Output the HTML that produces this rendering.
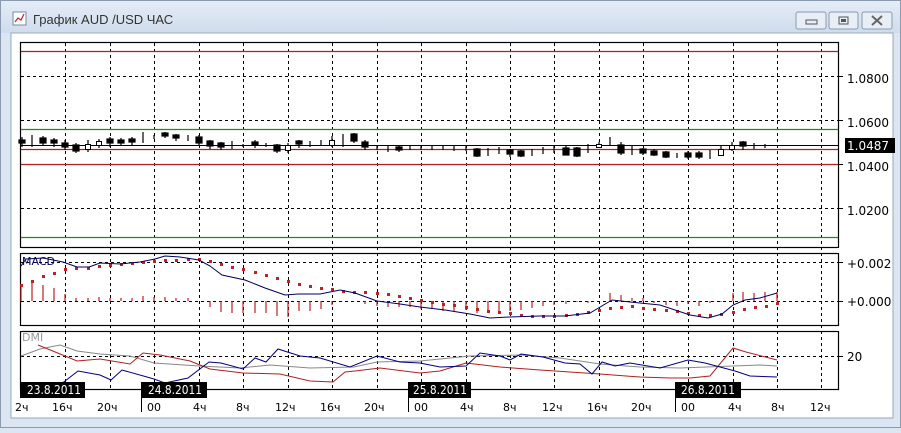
<!DOCTYPE html>
<html><head><meta charset="utf-8"><style>
body{margin:0;width:901px;height:428px;overflow:hidden;background:#dbe6f2;font-family:"Liberation Sans",sans-serif}
</style></head><body>
<svg width="901" height="428" viewBox="0 0 901 428" xmlns="http://www.w3.org/2000/svg" font-family="Liberation Sans, DejaVu Sans, sans-serif">
<defs><linearGradient id="tb" x1="0" y1="0" x2="0" y2="1"><stop offset="0" stop-color="#e4edf7"/><stop offset="1" stop-color="#cfdcec"/></linearGradient></defs>
<rect x="0" y="0" width="901" height="428" fill="#dbe6f2"/>
<rect x="0.5" y="0.5" width="900" height="427" fill="none" stroke="#8a9bb0"/>
<rect x="1" y="1" width="899" height="32" fill="url(#tb)"/>
<rect x="13" y="12" width="13" height="13" fill="#fff" stroke="#7a8aa0"/>
<polyline points="15,22 18,18 21,20 24,14" fill="none" stroke="#c03030" stroke-width="1.3"/>
<text x="33" y="24" font-size="13" fill="#333">График AUD /USD  ЧАС</text>
<g fill="#e8eef6" stroke="#8a9ab0"><rect x="796" y="12" width="30" height="17" rx="2"/><rect x="829" y="12" width="29" height="17" rx="2"/><rect x="862" y="12" width="30" height="17" rx="2"/></g>
<rect x="806" y="20" width="11" height="4" fill="none" stroke="#555"/>
<rect x="839" y="17" width="9" height="7" fill="none" stroke="#555"/><rect x="841" y="19" width="5" height="3" fill="#555"/>
<path d="M872 16 L882 25 M882 16 L872 25" stroke="#666" stroke-width="2"/>
<rect x="11" y="33" width="882" height="385" fill="#fff" stroke="#9aa8b8"/>
<g fill="none" stroke="#000" stroke-width="1.2">
<rect x="20.5" y="42.5" width="818" height="205"/>
<rect x="20.5" y="253.5" width="818" height="72"/>
<rect x="20.5" y="331.5" width="818" height="58"/>
</g>
<g stroke="#000" stroke-dasharray="3,3" stroke-width="1">
<path d="M65.5 43V390M110.5 43V390M154.5 43V390M199.5 43V390M243.5 43V390M288.5 43V390M332.5 43V390M377.5 43V390M421.5 43V390M466.5 43V390M510.5 43V390M554.5 43V390M599.5 43V390M643.5 43V390M688.5 43V390M733.5 43V390M777.5 43V390M821.5 43V390"/>
<path d="M21 76.5H838M21 120.5H838M21 164.5H838M21 208.5H838M21 262.5H838M21 301.5H838M21 356.5H838"/>
</g>
<g stroke="#fff" stroke-width="1.6"><path d="M21 248V253M21 326V331M838 248V253M838 326V331"/></g>
<path d="M21 51.5H838M21 149.5H838M21 164.5H838" stroke="#b02020" stroke-width="1.2"/>
<path d="M21 129.5H838M21 237.5H838" stroke="#1f8a1f" stroke-width="1.2"/>
<path d="M21 145.5H838" stroke="#000" stroke-width="1"/>
<path d="M838 76.5h5M838 120.5h5M838 164.5h5M838 208.5h5M838 262.5h5M838 301.5h5M838 356.5h5" stroke="#000"/>
<g font-size="12" fill="#000" font-family="DejaVu Sans, sans-serif">
<text x="847" y="83">1.0800</text><text x="847" y="127">1.0600</text><text x="847" y="171">1.0400</text><text x="847" y="215">1.0200</text>
<text x="847" y="268">+0.002</text><text x="847" y="306">+0.000</text><text x="847" y="361">20</text>
</g>
<rect x="845" y="138" width="50" height="15" fill="#000"/>
<text x="847" y="150" font-size="12" fill="#fff" font-family="DejaVu Sans, sans-serif">1.0487</text>
<g stroke="#000" stroke-width="1.2" fill="#000">
<path d="M22 137v10M32 135v12M43 136v10M54 138v9M65 140v10M76 143v10M88 140v12M99 139v9M110 137v10M121 138v8M132 137v8M143 132v11M154 135v4M165 132v6M176 134v7M188 135v6M199 135v10M210 140v9M221 142v8M232 141v8M243 144v3M255 140v8M266 143v4M277 144v9M288 143v10M299 140v8M310 141v6M321 140v6M332 136v11M343 134v13M354 133v10M365 140v10M377 145v5M388 146v6M399 146v6M410 145v5M421 145v5M432 145v5M443 145v5M454 146v5M466 146v5M477 148v9M488 148v8M499 147v7M510 149v8M521 150v7M532 149v7M543 147v7M554 146v7M566 146v9M577 147v10M588 144v9M599 142v5M610 137v9M621 142v13M632 145v10M643 148v7M654 149v7M666 151v7M677 153v5M688 151v8M699 151v8M710 150v9M721 145v9M732 142v9M743 141v9M754 143v6M765 144v4"/>
<rect x="19" y="140" width="6" height="3"/><rect x="40" y="138" width="6" height="5"/><rect x="51" y="140" width="6" height="3"/>
<rect x="62" y="143" width="6" height="4"/><rect x="73" y="145" width="6" height="6"/><rect x="107" y="139" width="6" height="4"/>
<rect x="118" y="140" width="6" height="3"/><rect x="129" y="139" width="6" height="3"/><rect x="162" y="133" width="6" height="3"/>
<rect x="173" y="135" width="6" height="3"/><rect x="196" y="137" width="6" height="6"/><rect x="207" y="141" width="6" height="5"/>
<rect x="218" y="143" width="6" height="4"/><rect x="252" y="142" width="6" height="3"/><rect x="274" y="145" width="6" height="6"/>
<rect x="296" y="141" width="6" height="3"/><rect x="351" y="134" width="6" height="7"/><rect x="362" y="142" width="6" height="5"/>
<rect x="396" y="147" width="6" height="3"/><rect x="474" y="149" width="6" height="7"/><rect x="507" y="150" width="6" height="4"/>
<rect x="518" y="151" width="6" height="5"/><rect x="563" y="148" width="6" height="7"/><rect x="574" y="148" width="6" height="8"/>
<rect x="618" y="145" width="6" height="8"/><rect x="640" y="149" width="6" height="4"/><rect x="651" y="151" width="6" height="4"/>
<rect x="663" y="152" width="6" height="5"/><rect x="685" y="153" width="6" height="4"/><rect x="696" y="153" width="6" height="4"/>
<rect x="740" y="142" width="6" height="4"/>
</g>
<g stroke="#000" fill="#fff">
<rect x="85.5" y="144.5" width="5" height="5"/><rect x="96.5" y="141.5" width="5" height="4"/><rect x="285.5" y="145.5" width="5" height="5"/>
<rect x="329.5" y="140.5" width="5" height="5"/><rect x="596.5" y="144.5" width="5" height="3"/><rect x="718.5" y="149.5" width="5" height="6"/>
<rect x="729.5" y="145.5" width="5" height="4"/>
</g>
<text x="22" y="265" font-size="11" fill="#000060" font-family="DejaVu Sans, sans-serif">MACD</text>
<g stroke="#c02020" stroke-width="1.2">
<path d="M21 287V301M32 282V301M43 285V301M54 288V301M65 294V301M76 298V301M88 298V301M99 297V301M110 298V301M121 298V301M132 298V301M143 296V301M154 297V301M165 297V301M176 298V301M188 298V301M210 301V307M221 301V312M232 301V313M243 301V313M255 301V313M266 301V313M277 301V316M288 301V317M299 301V311M310 301V311M321 301V309M332 301V305M365 301V304M377 301V306M388 301V307M399 301V307M410 301V307M421 301V309M432 301V309M443 301V311M454 301V311M466 301V310M477 301V313M488 301V313M499 301V313M510 301V311M521 301V310M532 301V308M543 301V306M554 301V305M566 301V304M577 301V302M588 301V303M599 301V301M610 293V301M621 295V301M632 298V301M643 298V301M654 301V303M666 301V305M677 301V306M688 301V304M699 301V306M710 301V303M721 301V302M733 293V301M743 292V301M754 293V301M765 292V301M777 292V301"/>
</g>
<g fill="#c02020">
<rect x="20" y="284" width="3" height="3"/><rect x="31" y="280" width="3" height="3"/><rect x="42" y="275" width="3" height="3"/><rect x="53" y="272" width="3" height="3"/><rect x="64" y="268" width="3" height="3"/><rect x="75" y="267" width="3" height="3"/><rect x="87" y="267" width="3" height="3"/><rect x="98" y="265" width="3" height="3"/><rect x="109" y="264" width="3" height="3"/><rect x="120" y="263" width="3" height="3"/><rect x="131" y="262" width="3" height="3"/><rect x="142" y="261" width="3" height="3"/><rect x="153" y="260" width="3" height="3"/><rect x="164" y="259" width="3" height="3"/><rect x="175" y="259" width="3" height="3"/><rect x="187" y="258" width="3" height="3"/><rect x="198" y="258" width="3" height="3"/><rect x="209" y="260" width="3" height="3"/><rect x="220" y="263" width="3" height="3"/><rect x="231" y="266" width="3" height="3"/><rect x="242" y="268" width="3" height="3"/><rect x="254" y="271" width="3" height="3"/><rect x="265" y="274" width="3" height="3"/><rect x="276" y="277" width="3" height="3"/><rect x="287" y="280" width="3" height="3"/><rect x="298" y="283" width="3" height="3"/><rect x="309" y="285" width="3" height="3"/><rect x="320" y="287" width="3" height="3"/><rect x="331" y="288" width="3" height="3"/><rect x="342" y="290" width="3" height="3"/><rect x="353" y="291" width="3" height="3"/><rect x="364" y="291" width="3" height="3"/><rect x="376" y="292" width="3" height="3"/><rect x="387" y="293" width="3" height="3"/><rect x="398" y="295" width="3" height="3"/><rect x="409" y="297" width="3" height="3"/><rect x="420" y="299" width="3" height="3"/><rect x="431" y="301" width="3" height="3"/><rect x="442" y="303" width="3" height="3"/><rect x="453" y="304" width="3" height="3"/><rect x="465" y="306" width="3" height="3"/><rect x="476" y="308" width="3" height="3"/><rect x="487" y="310" width="3" height="3"/><rect x="498" y="311" width="3" height="3"/><rect x="509" y="312" width="3" height="3"/><rect x="520" y="314" width="3" height="3"/><rect x="531" y="315" width="3" height="3"/><rect x="542" y="315" width="3" height="3"/><rect x="553" y="315" width="3" height="3"/><rect x="565" y="314" width="3" height="3"/><rect x="576" y="313" width="3" height="3"/><rect x="587" y="311" width="3" height="3"/><rect x="598" y="309" width="3" height="3"/><rect x="609" y="307" width="3" height="3"/><rect x="620" y="306" width="3" height="3"/><rect x="631" y="305" width="3" height="3"/><rect x="642" y="307" width="3" height="3"/><rect x="653" y="308" width="3" height="3"/><rect x="665" y="309" width="3" height="3"/><rect x="676" y="310" width="3" height="3"/><rect x="687" y="312" width="3" height="3"/><rect x="698" y="314" width="3" height="3"/><rect x="709" y="314" width="3" height="3"/><rect x="720" y="313" width="3" height="3"/><rect x="732" y="311" width="3" height="3"/><rect x="743" y="308" width="3" height="3"/><rect x="754" y="306" width="3" height="3"/><rect x="765" y="305" width="3" height="3"/><rect x="776" y="302" width="3" height="3"/>
</g>
<polyline fill="none" stroke="#000060" stroke-width="1" points="21,266 26,259 43,258 63,262 77,267 89,267 100,263 120,264 140,262 155,259 165,256 180,257 199,260 210,266 222,275 245,280 265,288 285,295 298,294 320,294 340,290 355,293 377,301 400,304 420,307 445,310 470,314 490,318 510,317 540,316 565,316 590,313 612,300 640,303 660,305 690,315 708,318 722,314 733,305 745,300 760,298 777,293"/>
<text x="22" y="341" font-size="11" fill="#999" font-family="DejaVu Sans, sans-serif">DMI</text>
<polyline fill="none" stroke="#888" stroke-width="1" points="21,356 40,349 60,345 77,351 100,354 130,356 154,363 199,366 240,368 270,365 310,368 354,367 377,362 420,361 440,359 470,356 520,355 560,358 600,364 640,367 680,368 733,366 760,365 777,366"/>
<polyline fill="none" stroke="#b02020" stroke-width="1" points="38,345 65,356 77,361 100,359 130,364 143,353 160,355 190,361 210,369 243,373 280,374 310,381 333,382 345,372 355,371 380,368 420,373 440,371 466,363 500,367 540,370 600,374 640,377 670,378 690,378 710,376 733,348 746,352 777,360"/>
<polyline fill="none" stroke="#000080" stroke-width="1" points="21,388 32,384 46,385 56,388 78,371 100,375 111,380 122,370 154,379 165,383 188,378 209,362 221,363 243,369 255,358 266,362 278,349 300,356 320,358 350,367 377,356 400,362 420,363 440,367 466,366 480,353 500,356 510,360 521,354 543,357 565,363 580,364 592,374 602,362 615,366 630,363 660,368 688,360 705,363 735,371 750,376 777,377"/>
<g font-size="12" font-family="DejaVu Sans, sans-serif">
<rect x="20" y="382" width="65" height="16" fill="#000"/><text x="27" y="394" fill="#fff" textLength="54" lengthAdjust="spacingAndGlyphs">23.8.2011</text>
<rect x="141" y="382" width="66" height="16" fill="#000"/><text x="148" y="394" fill="#fff" textLength="54" lengthAdjust="spacingAndGlyphs">24.8.2011</text>
<rect x="408" y="382" width="63" height="16" fill="#000"/><text x="413" y="394" fill="#fff" textLength="54" lengthAdjust="spacingAndGlyphs">25.8.2011</text>
<rect x="675" y="382" width="66" height="16" fill="#000"/><text x="681" y="394" fill="#fff" textLength="54" lengthAdjust="spacingAndGlyphs">26.8.2011</text>
</g>
<path d="M141.5 398V412M408.5 398V412M675.5 398V412" stroke="#000"/>
<g font-size="11" fill="#000" font-family="DejaVu Sans, sans-serif">
<text x="15" y="411">2ч</text><text x="52" y="411">16ч</text><text x="97" y="411">20ч</text><text x="147" y="411">00</text><text x="193" y="411">4ч</text><text x="236" y="411">8ч</text><text x="275" y="411">12ч</text><text x="320" y="411">16ч</text><text x="364" y="411">20ч</text><text x="414" y="411">00</text><text x="460" y="411">4ч</text><text x="503" y="411">8ч</text><text x="542" y="411">12ч</text><text x="587" y="411">16ч</text><text x="631" y="411">20ч</text><text x="681" y="411">00</text><text x="728" y="411">4ч</text><text x="771" y="411">8ч</text><text x="810" y="411">12ч</text>
</g>
</svg>
</body></html>
